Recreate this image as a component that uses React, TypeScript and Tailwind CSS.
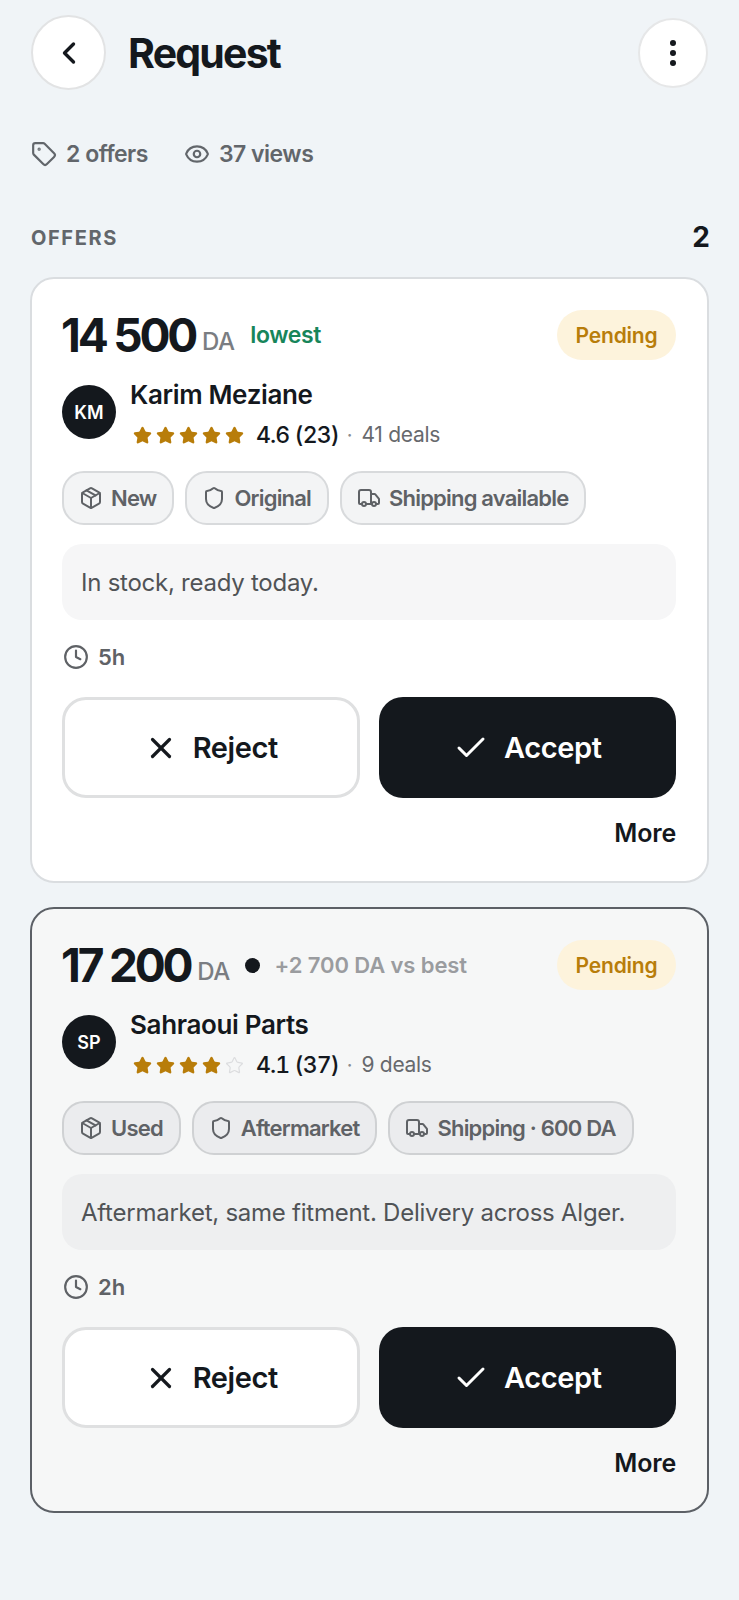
import { Check, ChevronLeft, Clock, EllipsisVertical, Eye, Package, Shield, Star, Tag, Truck, X } from "lucide-react";

interface Offer {
  price: string;
  name: string;
  initials: string;
  stars: number;
  rating: string;
  deals: string;
  chips: [string, string, string];
  note: string;
  age: string;
  best: boolean;
}

const offers: Offer[] = [
  {
    price: "14 500",
    name: "Karim Meziane",
    initials: "KM",
    stars: 5,
    rating: "4.6 (23)",
    deals: "41 deals",
    chips: ["New", "Original", "Shipping available"],
    note: "In stock, ready today.",
    age: "5h",
    best: true,
  },
  {
    price: "17 200",
    name: "Sahraoui Parts",
    initials: "SP",
    stars: 4,
    rating: "4.1 (37)",
    deals: "9 deals",
    chips: ["Used", "Aftermarket", "Shipping · 600 DA"],
    note: "Aftermarket, same fitment. Delivery across Alger.",
    age: "2h",
    best: false,
  },
];

function Chip({ icon: Icon, label, best }: { icon: typeof Package; label: string; best: boolean }) {
  return (
    <span
      className={`flex h-[54px] items-center gap-[8px] rounded-[22px] border-2 pl-[15px] pr-[16px] text-[22px] font-semibold tracking-[-0.8px] text-[#5f6266] ${
        best ? "border-[#d8dadc] bg-[#f3f4f5]" : "border-[#cfd1d3] bg-[#ebecee]"
      }`}
    >
      <Icon size={24} strokeWidth={2} />
      {label}
    </span>
  );
}

function OfferCard({ offer }: { offer: Offer }) {
  const { best } = offer;
  return (
    <div
      className={`rounded-[24px] pb-[33px] pl-[30px] pr-[31px] pt-[31px] ${
        best ? "border-2 border-[#dadde0] bg-white" : "border-2 border-[#5c6066] bg-[#f6f7f7]"
      }`}
    >
      <div className="flex h-[50px] items-center">
        <span className="-ml-[1px] text-[46px] font-bold leading-none tracking-[-3.2px] text-[#14181d]">{offer.price}</span>
        <span className="ml-[7px] mt-[14px] text-[24px] font-medium tracking-[-0.6px] text-[#7a7d82]">DA</span>
        {best ? (
          <span className="ml-[16px] text-[23px] font-semibold tracking-[-0.4px] text-[#17855a]">lowest</span>
        ) : (
          <>
            <span className="ml-[15px] h-[15px] w-[15px] rounded-full bg-[#14181d]" />
            <span className="ml-[15px] text-[22px] font-semibold tracking-[-0.1px] text-[#9a9c9f]">+2 700 DA vs best</span>
          </>
        )}
        <span className="ml-auto flex h-[50px] w-[119px] items-center justify-center rounded-full bg-[#fdf3dc] pt-px text-[21px] font-semibold tracking-[-0.2px] text-[#b87d0a]">
          Pending
        </span>
      </div>

      <div className="mt-[17px] flex items-start gap-[15px]">
        <span className="mt-[8px] flex h-[54px] w-[54px] shrink-0 items-center justify-center rounded-full bg-[#14181d] text-[18px] font-semibold text-white">
          {offer.initials}
        </span>
        <div>
          <div className="-ml-px text-[26px] font-semibold leading-[36px] tracking-[-0.35px] text-[#14181d]">{offer.name}</div>
          <div className="mt-[4px] flex h-[36px] items-center">
            <span className="ml-[2px] flex gap-[4px]">
              {[0, 1, 2, 3, 4].map((i) =>
                i < offer.stars ? (
                  <Star key={i} size={19} className="fill-[#b87d0a] text-[#b87d0a]" />
                ) : (
                  <Star key={i} size={19} className="text-[#dcdddf]" strokeWidth={1.5} />
                ),
              )}
            </span>
            <span className="ml-[12px] text-[23px] font-medium tabular-nums tracking-[-0.9px] text-[#14181d]">{offer.rating}</span>
            <span className="ml-[8px] text-[20px] text-[#8a8d90]">·</span>
            <span className="ml-[9px] text-[21px] tracking-[-0.3px] text-[#67696d]">{offer.deals}</span>
          </div>
        </div>
      </div>

      <div className="mt-[18px] flex gap-[11px]">
        <Chip icon={Package} label={offer.chips[0]} best={best} />
        <Chip icon={Shield} label={offer.chips[1]} best={best} />
        <Chip icon={Truck} label={offer.chips[2]} best={best} />
      </div>

      <div
        className={`mt-[19px] flex h-[76px] items-center rounded-[20px] px-[19px] pt-[2px] text-[24px] tracking-[-0.25px] text-[#505356] ${
          best ? "bg-[#f6f6f7]" : "bg-[#eeeff0]"
        }`}
      >
        {offer.note}
      </div>

      <div className="mt-[23px] flex h-[28px] items-center gap-[9px] text-[22px] font-semibold text-[#5f6266]">
        <Clock size={26} strokeWidth={2} className="ml-px" />
        {offer.age}
      </div>

      <div className="mt-[26px] grid grid-cols-2 gap-[19px]">
        <button
          type="button"
          className="flex h-[101px] items-center justify-center gap-[15px] rounded-[24px] border-[3px] border-[#dfe0e1] bg-white text-[29px] font-semibold tracking-[-0.4px] text-[#14181d]"
        >
          <X size={34} strokeWidth={2.25} />
          Reject
        </button>
        <button
          type="button"
          className="flex h-[101px] items-center justify-center gap-[15px] rounded-[24px] bg-[#14181d] text-[29px] font-semibold tracking-[-0.4px] text-white"
        >
          <Check size={36} strokeWidth={2} />
          Accept
        </button>
      </div>

      <div className="mt-[20px] text-right text-[25px] font-semibold leading-[30px] tracking-[-0.2px] text-[#14181d]">More</div>
    </div>
  );
}

export default function App() {
  return (
    <div className="min-h-[1600px] bg-[#f0f4f7] px-[30px] pt-[15px] font-['Inter',sans-serif]">
      <div className="flex items-center">
        <button
          type="button"
          className="ml-px flex h-[75px] w-[75px] items-center justify-center rounded-full border-2 border-[#e2e3e4] bg-white text-[#14181d]"
        >
          <ChevronLeft size={36} strokeWidth={2.25} />
        </button>
        <h1 className="ml-[22px] mt-[2px] text-[41px] font-bold tracking-[-1.8px] text-[#14181d]">Request</h1>
        <button
          type="button"
          className="ml-auto mr-px flex h-[70px] w-[70px] items-center justify-center rounded-full border-2 border-[#e6e7e8] bg-white text-[#14181d]"
        >
          <EllipsisVertical size={34} strokeWidth={2.25} />
        </button>
      </div>

      <div className="mt-[47px] flex h-[34px] items-center text-[23px] font-semibold tracking-[-0.5px] text-[#62666b]">
        <Tag size={26} strokeWidth={2} className="ml-px" />
        <span className="ml-[9px]">2 offers</span>
        <Eye size={26} strokeWidth={2} className="ml-[36px]" />
        <span className="ml-[9px]">37 views</span>
      </div>

      <div className="mt-[50px] flex h-[32px] items-center justify-between">
        <span className="ml-px mt-[2px] text-[20px] font-bold tracking-[1.6px] text-[#62666b]">OFFERS</span>
        <span className="-mr-px text-[28px] font-bold text-[#14181d]">2</span>
      </div>

      <div className="mt-[24px] flex flex-col gap-[24px]">
        {offers.map((offer) => (
          <OfferCard key={offer.name} offer={offer} />
        ))}
      </div>
    </div>
  );
}
